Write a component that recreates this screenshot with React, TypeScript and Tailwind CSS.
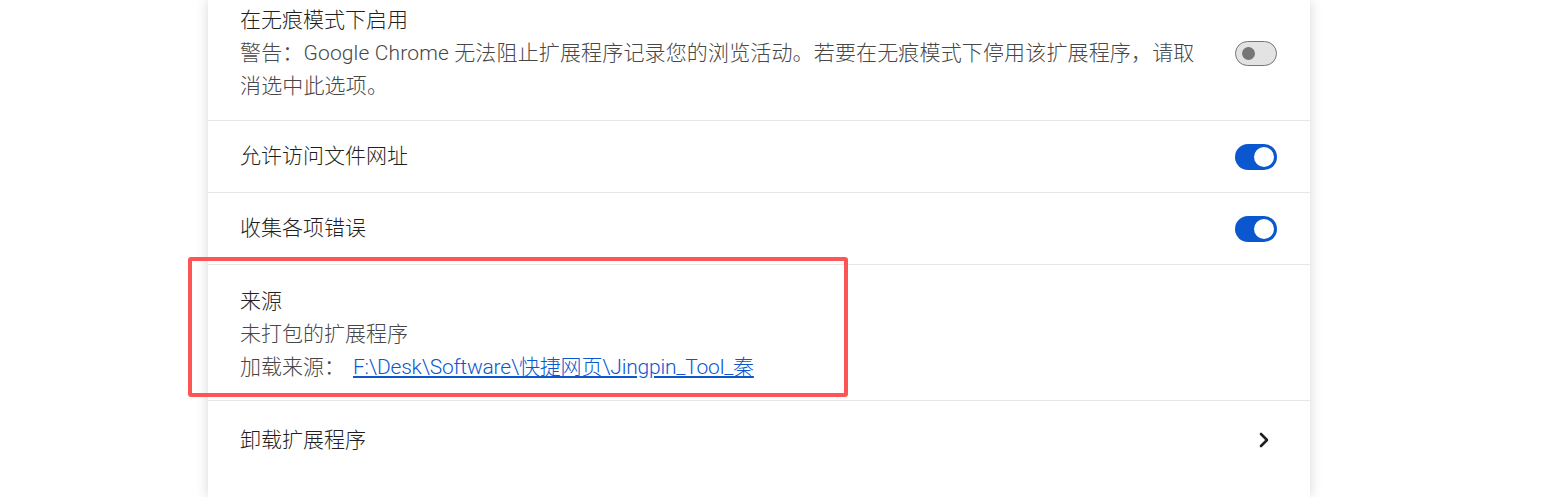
import React from "react";
import { ChevronRight } from "lucide-react";

const font = { fontFamily: 'Roboto, "Noto Sans CJK SC", "Noto Sans", sans-serif' };

function Toggle({ on }: { on: boolean }) {
  if (on) {
    return (
      <div className="w-[42px] h-[26px] rounded-full bg-[#0b57d0] flex items-center justify-end pr-[3px] shrink-0">
        <div className="w-[20px] h-[20px] rounded-full bg-white" />
      </div>
    );
  }
  return (
    <div className="w-[42px] h-[25px] rounded-full bg-[#e3e3e3] border border-[#747775] flex items-center pl-[6px] shrink-0">
      <div className="w-[13px] h-[13px] rounded-full bg-[#747775]" />
    </div>
  );
}

export default function App() {
  return (
    <div className="min-h-screen bg-white" style={font}>
      <div className="ml-[208px] w-[1102px] min-h-screen bg-white shadow-[0_0_12px_rgba(0,0,0,0.16)] text-[21px] leading-[33px] font-light">
        {/* 无痕模式 */}
        <div className="flex items-center justify-between pl-8 pr-[33px] pt-[4px] pb-[17px] border-b border-[#e6e6e6]">
          <div>
            <div className="text-[#1f1f1f]">在无痕模式下启用</div>
            <div className="text-[#474747] tracking-[0.15px]">
              警告：Google Chrome 无法阻止扩展程序记录您的浏览活动。若要在无痕模式下停用该扩展程序，请取
              <br />
              消选中此选项。
            </div>
          </div>
          <Toggle on={false} />
        </div>

        <div className="flex items-center justify-between pl-8 pr-[33px] h-[72px] border-b border-[#e6e6e6]">
          <div className="text-[#1f1f1f]">允许访问文件网址</div>
          <Toggle on />
        </div>

        <div className="flex items-center justify-between pl-8 pr-[33px] h-[72px] border-b border-[#e6e6e6]">
          <div className="text-[#1f1f1f]">收集各项错误</div>
          <Toggle on />
        </div>

        {/* 来源 */}
        <div className="relative pl-8 pt-[20px] pb-[16px] border-b border-[#e6e6e6]">
          <div className="text-[#1f1f1f]">来源</div>
          <div className="text-[#474747]">未打包的扩展程序</div>
          <div className="text-[#474747]">
            加载来源：
            <a href="#" className="ml-[8px] text-[#0b57d0] underline tracking-[-0.2px]">
              F:\Desk\Software\快捷网页\Jingpin_Tool_秦
            </a>
          </div>
          <div className="absolute -left-[20px] -top-[8px] w-[660px] h-[140px] border-[4px] border-[#ff5454] rounded-[3px] pointer-events-none" />
        </div>

        <div className="flex items-center justify-between pl-8 pr-[34px] h-[78px]">
          <div className="text-[#1f1f1f]">卸载扩展程序</div>
          <ChevronRight size={24} strokeWidth={2.6} className="text-[#1f1f1f]" />
        </div>
      </div>
    </div>
  );
}
